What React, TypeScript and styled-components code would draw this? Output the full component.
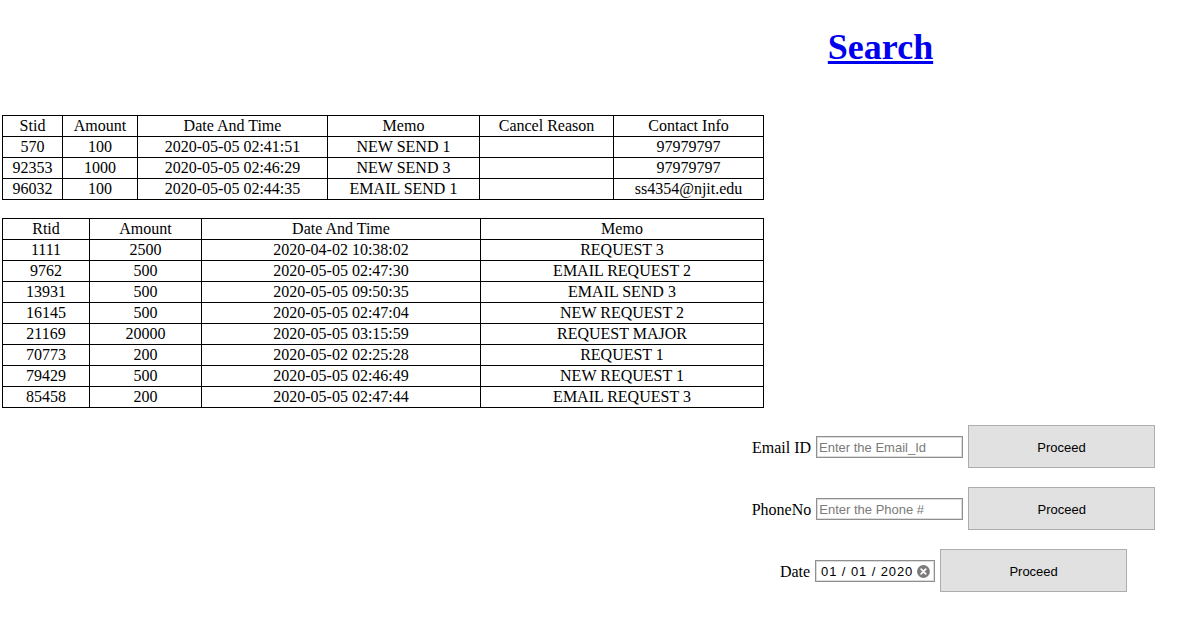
import styled, { createGlobalStyle } from "styled-components";

const GlobalStyle = createGlobalStyle`
  html, body {
    margin: 0;
    padding: 0;
    background: #ffffff;
  }
  body {
    font-family: "Liberation Serif", "Times New Roman", serif;
    font-size: 16px;
    color: #000000;
  }
`;

const sentRows = [
  { id: "570", amount: "100", date: "2020-05-05 02:41:51", memo: "NEW SEND 1", reason: "", contact: "97979797" },
  { id: "92353", amount: "1000", date: "2020-05-05 02:46:29", memo: "NEW SEND 3", reason: "", contact: "97979797" },
  { id: "96032", amount: "100", date: "2020-05-05 02:44:35", memo: "EMAIL SEND 1", reason: "", contact: "ss4354@njit.edu" },
];

const requestRows = [
  { id: "1111", amount: "2500", date: "2020-04-02 10:38:02", memo: "REQUEST 3" },
  { id: "9762", amount: "500", date: "2020-05-05 02:47:30", memo: "EMAIL REQUEST 2" },
  { id: "13931", amount: "500", date: "2020-05-05 09:50:35", memo: "EMAIL SEND 3" },
  { id: "16145", amount: "500", date: "2020-05-05 02:47:04", memo: "NEW REQUEST 2" },
  { id: "21169", amount: "20000", date: "2020-05-05 03:15:59", memo: "REQUEST MAJOR" },
  { id: "70773", amount: "200", date: "2020-05-02 02:25:28", memo: "REQUEST 1" },
  { id: "79429", amount: "500", date: "2020-05-05 02:46:49", memo: "NEW REQUEST 1" },
  { id: "85458", amount: "200", date: "2020-05-05 02:47:44", memo: "EMAIL REQUEST 3" },
];

const Page = styled.div`
  width: 1204px;
  padding-left: 2px;
  box-sizing: border-box;
`;

const Header = styled.div`
  width: 647px;
  margin: 27px 0 48px auto;
  text-align: center;
`;

const SearchLink = styled.a`
  font-family: "Liberation Serif", "Times New Roman", serif;
  font-size: 36px;
  line-height: 40px;
  font-weight: bold;
  color: #0000ee;
  text-decoration: underline;
  cursor: pointer;
`;

const Table = styled.table<{ $gap?: number }>`
  border-collapse: collapse;
  width: 761px;
  table-layout: fixed;
  margin-bottom: ${(p) => p.$gap ?? 0}px;

  & th,
  & td {
    border: 1px solid #000000;
    padding: 1px;
    text-align: center;
    font-weight: normal;
    font-size: 16px;
    line-height: 18px;
    white-space: nowrap;
  }
`;

const Col = styled.col<{ $w: number }>`
  width: ${(p) => p.$w}px;
`;

const FormPanel = styled.div`
  width: 501px;
  margin: 17px 0 0 auto;
  display: flex;
  flex-direction: column;
  gap: 19px;
`;

const FormRow = styled.div`
  display: flex;
  align-items: center;
  justify-content: center;
  gap: 5px;
`;

const Label = styled.span`
  font-family: "Liberation Serif", "Times New Roman", serif;
  font-size: 16px;
  padding-top: 2px;
`;

const TextInput = styled.input`
  width: 147px;
  height: 22px;
  box-sizing: border-box;
  border: 1px solid #8f8f8f;
  box-shadow: inset 0 0 0 1px #dcdcdc;
  padding: 1px 2px 0;
  font-family: "Liberation Sans", Arial, sans-serif;
  font-size: 13px;
  color: #000000;
  outline: none;
  &::placeholder {
    color: #7a7a7a;
  }
`;

const DateBox = styled.div`
  width: 120px;
  height: 22px;
  box-sizing: border-box;
  border: 1px solid #8f8f8f;
  box-shadow: inset 0 0 0 1px #dcdcdc;
  display: flex;
  align-items: center;
  padding: 1px 4px 0 5px;
  gap: 4px;
`;

const DateText = styled.span`
  font-family: "Liberation Sans", Arial, sans-serif;
  font-size: 13px;
  letter-spacing: 0.9px;
  color: #000000;
  white-space: nowrap;
`;

const ProceedButton = styled.button`
  width: 187px;
  height: 43px;
  box-sizing: border-box;
  background: #e1e1e1;
  border: 1px solid #adadad;
  font-family: "Liberation Sans", Arial, sans-serif;
  font-size: 13px;
  color: #000000;
  padding: 2px 0 0;
  cursor: pointer;
`;

function ClearIcon() {
  return (
    <svg width="13" height="13" viewBox="0 0 13 13">
      <circle cx="6.5" cy="6.5" r="6.5" fill="#7b7b7b" />
      <path d="M4.2 4.2 L8.8 8.8 M8.8 4.2 L4.2 8.8" stroke="#ffffff" strokeWidth="1.8" strokeLinecap="round" />
    </svg>
  );
}

export default function App() {
  return (
    <Page>
      <GlobalStyle />
      <Header>
        <SearchLink href="#">Search</SearchLink>
      </Header>

      <Table $gap={18}>
        <colgroup>
          <Col $w={60} />
          <Col $w={75} />
          <Col $w={190} />
          <Col $w={152} />
          <Col $w={134} />
          <Col $w={150} />
        </colgroup>
        <thead>
          <tr>
            <th>Stid</th>
            <th>Amount</th>
            <th>Date And Time</th>
            <th>Memo</th>
            <th>Cancel Reason</th>
            <th>Contact Info</th>
          </tr>
        </thead>
        <tbody>
          {sentRows.map((r) => (
            <tr key={r.id}>
              <td>{r.id}</td>
              <td>{r.amount}</td>
              <td>{r.date}</td>
              <td>{r.memo}</td>
              <td>{r.reason}</td>
              <td>{r.contact}</td>
            </tr>
          ))}
        </tbody>
      </Table>

      <Table>
        <colgroup>
          <Col $w={87} />
          <Col $w={112} />
          <Col $w={279} />
          <Col $w={283} />
        </colgroup>
        <thead>
          <tr>
            <th>Rtid</th>
            <th>Amount</th>
            <th>Date And Time</th>
            <th>Memo</th>
          </tr>
        </thead>
        <tbody>
          {requestRows.map((r) => (
            <tr key={r.id}>
              <td>{r.id}</td>
              <td>{r.amount}</td>
              <td>{r.date}</td>
              <td>{r.memo}</td>
            </tr>
          ))}
        </tbody>
      </Table>

      <FormPanel>
        <FormRow>
          <Label>Email ID</Label>
          <TextInput type="text" placeholder="Enter the Email_Id" />
          <ProceedButton>Proceed</ProceedButton>
        </FormRow>
        <FormRow>
          <Label>PhoneNo</Label>
          <TextInput type="text" placeholder="Enter the Phone #" />
          <ProceedButton>Proceed</ProceedButton>
        </FormRow>
        <FormRow>
          <Label>Date</Label>
          <DateBox>
            <DateText>01 / 01 / 2020</DateText>
            <ClearIcon />
          </DateBox>
          <ProceedButton>Proceed</ProceedButton>
        </FormRow>
      </FormPanel>
    </Page>
  );
}
